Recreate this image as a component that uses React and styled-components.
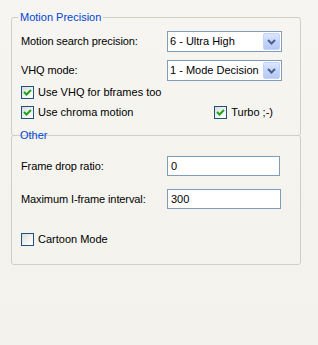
import React from 'react';
import styled, { createGlobalStyle } from 'styled-components';

const GlobalStyle = createGlobalStyle`
html, body {
  margin: 0;
  padding: 0;
  background: #F4F3EE;
}
body {
  font-family: 'Liberation Sans', Arial, sans-serif;
  font-size: 11px;
  color: #000;
}
`

const Page = styled.div`
width: 318px;
height: 345px;
box-sizing: border-box;
padding: 11px 17px 0 11px;
background: linear-gradient(to bottom, #F6F5F1 0%, #F4F3EE 60%, #F3F2EC 100%);
`

const Group = styled.fieldset`
margin: ${p => p.$overlap ? '-7px 0 0 0' : '0'};
padding: 0 8px ${p => p.$bottom}px 9px;
border: 1px solid #D0D0BF;
border-radius: 3px;
min-width: 0;
`

const Title = styled.legend`
margin-left: -3px;
padding: 0 2px;
line-height: 13px;
color: #0046D5;
`

const Row = styled.div`
display: grid;
grid-template-columns: 146px 1fr;
align-items: center;
margin-top: ${p => p.$top}px;
`

const Label = styled.span`
line-height: 13px;
letter-spacing: -0.1px;
`

const Combo = styled.div`
box-sizing: border-box;
width: 115px;
height: 21px;
border: 1px solid #7F9DB9;
background: #fff;
display: flex;
align-items: center;
justify-content: space-between;
padding: 1px 1px 1px 2px;
`

const ComboText = styled.span`
line-height: 13px;
`

const ComboButton = styled.div`
box-sizing: border-box;
width: 17px;
height: 17px;
border: 1px solid #C3D3FD;
border-radius: 2px;
background: linear-gradient(to bottom, #DCE6FE 0%, #C4D5FC 50%, #B6C8F6 100%);
display: flex;
align-items: center;
justify-content: center;
`

const Edit = styled.div`
box-sizing: border-box;
width: ${p => p.$width}px;
height: 20px;
border: 1px solid #7F9DB9;
background: #fff;
padding: 0 3px;
line-height: 18px;
`

const CheckRow = styled.div`
display: flex;
align-items: center;
justify-content: space-between;
margin-top: ${p => p.$top}px;
padding-right: ${p => p.$right || 0}px;
`

const CheckLabel = styled.label`
display: flex;
align-items: center;
gap: 4px;
line-height: 13px;
`

const Box = styled.span`
box-sizing: border-box;
width: 13px;
height: 13px;
border: 1px solid #1C5180;
background: linear-gradient(135deg, #DCDCD7 0%, #F4F4F0 60%, #FFFFFF 100%);
display: flex;
align-items: center;
justify-content: center;
`

const Chevron = () => (
  <svg width="9" height="6" viewBox="0 0 9 6">
    <path d="M1 1 L4.5 4.5 L8 1" fill="none" stroke="#4D6185" strokeWidth="2" />
  </svg>
)

const Tick = () => (
  <svg width="9" height="9" viewBox="0 0 9 9">
    <path d="M1 4 L3.5 6.5 L8 2" fill="none" stroke="#21A121" strokeWidth="2" />
  </svg>
)

const Check = ({ checked, children }) => (
  <CheckLabel>
    <Box>{checked && <Tick />}</Box>
    <span>{children}</span>
  </CheckLabel>
)

const Select = ({ value }) => (
  <Combo>
    <ComboText>{value}</ComboText>
    <ComboButton><Chevron /></ComboButton>
  </Combo>
)

export default function App() {
  return (
    <Page>
      <GlobalStyle />
      <Group $bottom={16}>
        <Title>Motion Precision</Title>
        <Row $top={7}>
          <Label>Motion search precision:</Label>
          <Select value="6 - Ultra High" />
        </Row>
        <Row $top={8}>
          <Label>VHQ mode:</Label>
          <Select value="1 - Mode Decision" />
        </Row>
        <CheckRow $top={5}>
          <Check checked>Use VHQ for bframes too</Check>
        </CheckRow>
        <CheckRow $top={7} $right={19}>
          <Check checked>Use chroma motion</Check>
          <Check checked>Turbo ;-)</Check>
        </CheckRow>
      </Group>
      <Group $overlap $bottom={18}>
        <Title>Other</Title>
        <Row $top={14}>
          <Label>Frame drop ratio:</Label>
          <Edit $width={113}>0</Edit>
        </Row>
        <Row $top={13}>
          <Label>Maximum I-frame interval:</Label>
          <Edit $width={114}>300</Edit>
        </Row>
        <CheckRow $top={24}>
          <Check>Cartoon Mode</Check>
        </CheckRow>
      </Group>
    </Page>
  );
}
